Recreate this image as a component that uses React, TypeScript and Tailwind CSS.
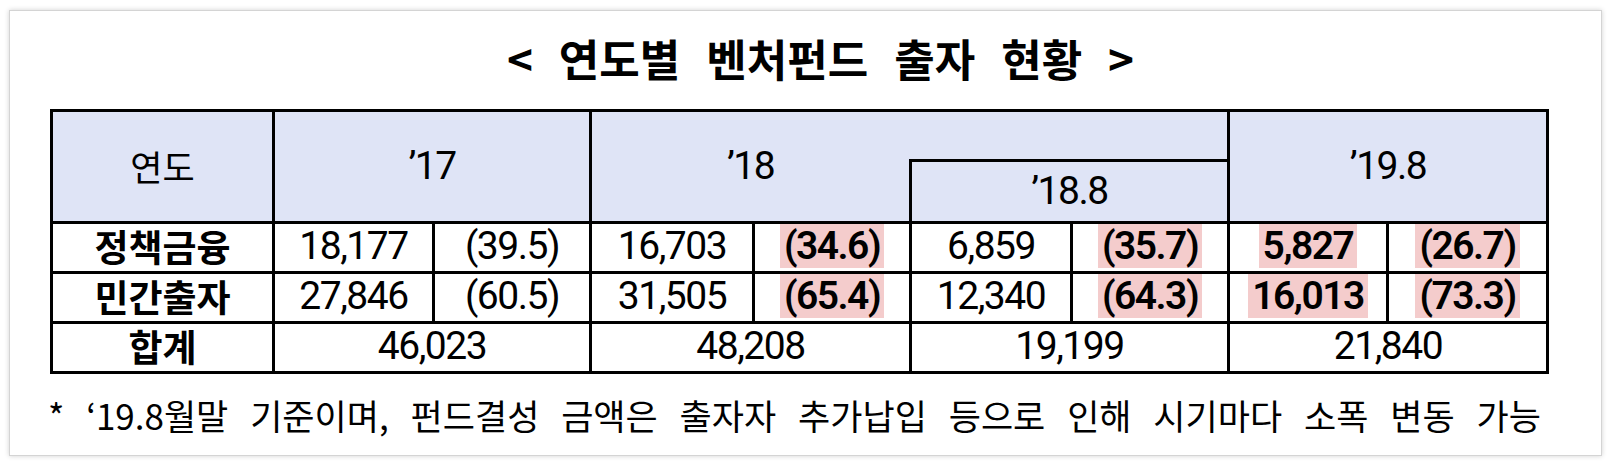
const KR = "font-['Noto_Sans_CJK_KR','Noto_Sans',sans-serif]";
const NUM = "font-['Roboto','Noto_Sans_CJK_KR',sans-serif] tracking-[-1.5px]";

const COLS = [222, 160, 157, 163, 157, 161, 157, 159, 160];

type Cell = { v: string; hl?: boolean };

const ROWS: { label: string; cells: Cell[] }[] = [
  {
    label: "정책금융",
    cells: [
      { v: "18,177" },
      { v: "(39.5)" },
      { v: "16,703" },
      { v: "(34.6)", hl: true },
      { v: "6,859" },
      { v: "(35.7)", hl: true },
      { v: "5,827", hl: true },
      { v: "(26.7)", hl: true },
    ],
  },
  {
    label: "민간출자",
    cells: [
      { v: "27,846" },
      { v: "(60.5)" },
      { v: "31,505" },
      { v: "(65.4)", hl: true },
      { v: "12,340" },
      { v: "(64.3)", hl: true },
      { v: "16,013", hl: true },
      { v: "(73.3)", hl: true },
    ],
  },
];

const TOTALS = ["46,023", "48,208", "19,199", "21,840"];

const td = "border-[3px] border-black p-0 text-center align-middle";

function Value({ cell }: { cell: Cell }) {
  if (!cell.hl) {
    return <span className={`${NUM} text-[39px] leading-[44px]`}>{cell.v}</span>;
  }
  return (
    <span
      className={`${NUM} inline-flex h-[44px] items-center bg-[#f4cccc] px-[4px] text-[39px] font-semibold leading-[44px]`}
    >
      {cell.v}
    </span>
  );
}

export default function App() {
  return (
    <div className="h-[466px] w-[1612px] bg-white pl-[9px] pr-[10px] pt-[10px] text-black">
      <div className="flex h-[446px] flex-col border border-[#d4d4d4] bg-white shadow-[0_0_5px_rgba(0,0,0,0.18)]">
        <h1
          className={`${KR} mt-[22px] h-[50px] pl-[30px] text-center text-[44px] font-bold leading-[50px] [word-spacing:16px]`}
        >
          &lt; 연도별 벤처펀드 출자 현황 &gt;
        </h1>

        <table className="ml-[40px] mt-[26px] w-[1499px] table-fixed border-collapse">
          <colgroup>
            {COLS.map((w, i) => (
              <col key={i} style={{ width: w }} />
            ))}
          </colgroup>
          <thead>
            <tr className="h-[50px]">
              <td rowSpan={2} className={`${td} ${KR} bg-[#dfe4f6] text-[35px]`}>
                연도
              </td>
              <td rowSpan={2} colSpan={2} className={`${td} ${NUM} bg-[#dfe4f6] text-[39px]`}>
                ’17
              </td>
              <td
                rowSpan={2}
                colSpan={2}
                className={`${td} ${NUM} border-r-0 bg-[#dfe4f6] text-[39px]`}
              >
                ’18
              </td>
              <td colSpan={2} className={`${td} border-l-0 bg-[#dfe4f6]`} />
              <td rowSpan={2} colSpan={2} className={`${td} ${NUM} bg-[#dfe4f6] text-[39px]`}>
                ’19.8
              </td>
            </tr>
            <tr className="h-[52px]">
              <td colSpan={2} className={`${td} ${NUM} bg-[#dfe4f6] text-[39px]`}>
                ’18.8
              </td>
            </tr>
          </thead>
          <tbody>
            {ROWS.map((row) => (
              <tr key={row.label} className="h-[50px]">
                <td className={`${td} ${KR} pb-[3px] text-[37px] font-bold leading-[44px]`}>
                  {row.label}
                </td>
                {row.cells.map((c, i) => (
                  <td key={i} className={`${td} pb-[3px]`}>
                    <Value cell={c} />
                  </td>
                ))}
              </tr>
            ))}
            <tr className="h-[50px]">
              <td className={`${td} ${KR} pb-[3px] text-[37px] font-bold leading-[44px]`}>합계</td>
              {TOTALS.map((t) => (
                <td key={t} colSpan={2} className={`${td} pb-[3px]`}>
                  <span className={`${NUM} text-[39px] leading-[44px]`}>{t}</span>
                </td>
              ))}
            </tr>
          </tbody>
        </table>

        <p className={`${KR} mt-[21px] pl-[38px] text-[35px] leading-[40px] [word-spacing:14px]`}>
          * ‘19.8월말 기준이며, 펀드결성 금액은 출자자 추가납입 등으로 인해 시기마다 소폭 변동 가능
        </p>
      </div>
    </div>
  );
}
